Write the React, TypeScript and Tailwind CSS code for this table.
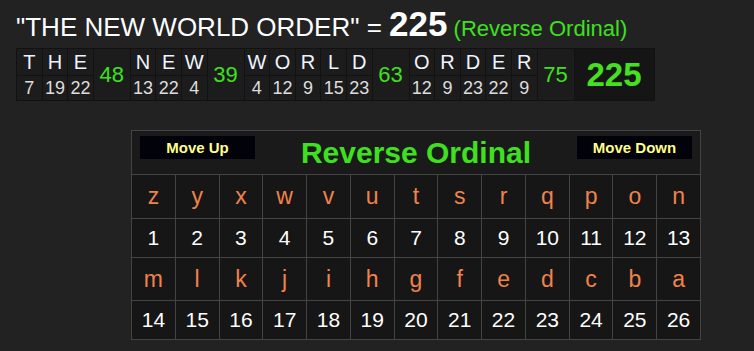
import React from "react";

const groups: { letters: [string, number][]; sum: number }[] = [
  { letters: [["T", 7], ["H", 19], ["E", 22]], sum: 48 },
  { letters: [["N", 13], ["E", 22], ["W", 4]], sum: 39 },
  { letters: [["W", 4], ["O", 12], ["R", 9], ["L", 15], ["D", 23]], sum: 63 },
  { letters: [["O", 12], ["R", 9], ["D", 23], ["E", 22], ["R", 9]], sum: 75 },
];

const alpha = "zyxwvutsrqponmlkjihgfedcba".split("");

function LetterRow({ start }: { start: number }) {
  return (
    <div className="grid grid-cols-[repeat(13,minmax(0,1fr))] gap-px">
      {alpha.slice(start, start + 13).map((l, i) => (
        <div
          key={i}
          className={`bg-[#161616] flex items-center justify-center text-[23px] text-[#f0824c] ${start === 0 ? "h-[43px]" : "h-[42px]"}`}
        >
          {l}
        </div>
      ))}
    </div>
  );
}

function NumberRow({ start }: { start: number }) {
  return (
    <div className="grid grid-cols-[repeat(13,minmax(0,1fr))] gap-px">
      {Array.from({ length: 13 }).map((_, i) => (
        <div
          key={i}
          className="bg-[#161616] h-[38px] flex items-center justify-center text-[21px] text-white"
        >
          {start + i + 1}
        </div>
      ))}
    </div>
  );
}

function MoveButton({ label }: { label: string }) {
  return (
    <button className="mt-[5px] w-[115px] h-[23px] bg-[#02020a] text-[#ffff88] font-bold text-[15px] leading-none flex items-center justify-center">
      {label}
    </button>
  );
}

export default function App() {
  return (
    <div
      className="w-[754px] h-[351px] bg-[#222222] overflow-hidden"
      style={{ fontFamily: '"Liberation Sans", Arial, sans-serif' }}
    >
      <div className="pl-[16px] pt-[6px] h-[48px] flex items-baseline whitespace-pre leading-none">
        <span className="text-[26px] text-white">{'"THE NEW WORLD ORDER" = '}</span>
        <span className="text-[35px] font-bold text-white">225</span>
        <span className="text-[22px] text-[#3fe01f]"> (Reverse Ordinal)</span>
      </div>

      <div className="ml-[16px] flex w-max bg-[#121212] p-px gap-px">
        {groups.map((g, gi) => (
          <React.Fragment key={gi}>
            {g.letters.map(([l, n], i) => (
              <div key={i} className="flex flex-col gap-px w-[24.6px]">
                <div className="h-[26px] bg-[#1c1c1c] flex items-center justify-center text-[20px] text-[#eef4ff]">
                  {l}
                </div>
                <div className="h-[24px] bg-[#1c1c1c] flex items-center justify-center text-[18px] text-[#dddddd]">
                  {n}
                </div>
              </div>
            ))}
            <div className="w-[36px] h-[51px] bg-[#1c1c1c] flex items-center justify-center text-[22px] text-[#3fe01f]">
              {g.sum}
            </div>
          </React.Fragment>
        ))}
        <div className="w-[79px] h-[51px] bg-[#151515] flex items-center justify-center text-[33px] font-bold text-[#45e01f]">
          225
        </div>
      </div>

      <div className="ml-[131px] mt-[29px] w-[570px] bg-[#444444] p-px flex flex-col gap-px">
        <div className="h-[43px] bg-[#1a1a1a] flex items-start px-[8px]">
          <MoveButton label="Move Up" />
          <div className="flex-1 h-full flex items-center justify-center text-[30px] font-bold text-[#3fe01f]">
            Reverse Ordinal
          </div>
          <MoveButton label="Move Down" />
        </div>
        <LetterRow start={0} />
        <NumberRow start={0} />
        <LetterRow start={13} />
        <NumberRow start={13} />
      </div>
    </div>
  );
}
